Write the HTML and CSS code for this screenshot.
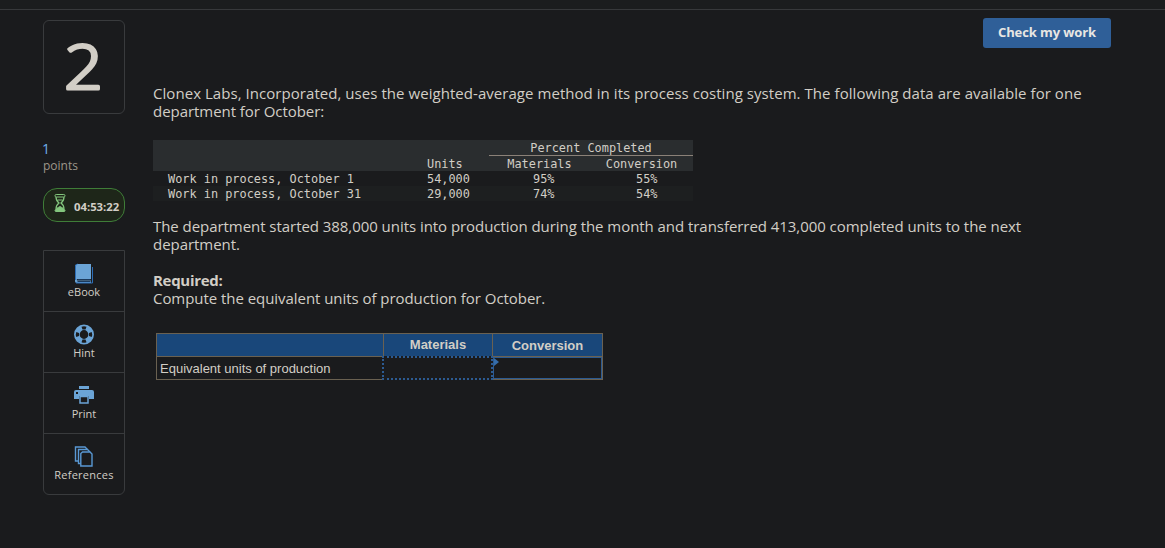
FILE: index.html
```html
<!DOCTYPE html>
<html lang="en">
<head>
    <meta charset="UTF-8">
    <meta name="viewport" content="width=device-width, initial-scale=1.0">
    <title>Question 2</title>
    <link rel="stylesheet" href="styles.css">
</head>
<body>
    <header class="topbar"></header>

    <div class="page">
        <aside class="sidebar">
            <div class="question-number">
                <svg width="80" height="92" viewBox="0 0 80 92">
                    <text x="39.500" y="68" text-anchor="middle" textLength="39" lengthAdjust="spacingAndGlyphs">2</text>
                </svg>
            </div>
            <div class="points">
                <span class="points-value">1</span>
                <span class="points-label">points</span>
            </div>
            <div class="timer">
                <svg width="12" height="20" viewBox="0 0 12 20" fill="none" stroke="#83c67d">
                    <rect x="1" y="1.500" width="10" height="2.500" rx="1.200"/>
                    <path d="M2 4c0 3 1 4.500 3 6c-2 1.500-3 3-3 6M10 4c0 3-1 4.500-3 6c2 1.500 3 3 3 6M3.500 7h5" stroke-width="1.200"/>
                    <path d="M2.500 16c0-1 2-1.500 3.500-2.500c1.500 1 3.500 1.500 3.500 2.500z" fill="#83c67d"/>
                    <rect x="1" y="16.500" width="10" height="2" rx="1" fill="#83c67d"/>
                </svg>
                <span>04:53:22</span>
            </div>

            <nav class="tools">
                <a class="tool">
                    <svg width="20" height="21" viewBox="0 0 20 21">
                        <path d="M3 1h14v15H3.500c-1 0-1 1.500 0 1.500H17V20H3c-1.500 0-2-1-2-2V3c0-1 1-2 2-2z" fill="#6ba4d6"/>
                        <path d="M1.500 17V3q0-1.500 2-2M2 20h16.500V4" fill="none" stroke="#2c6db5"/>
                        <path d="M3.500 16.500h13M3.500 18.500h13" fill="none" stroke="#1c3a5c"/>
                    </svg>
                    <span>eBook</span>
                </a>
                <a class="tool">
                    <svg width="20" height="21" viewBox="0 0 20 21">
                        <circle cx="10" cy="10.500" r="7.200" fill="none" stroke="#6ba4d6" stroke-width="5.600"/>
                        <path d="M7.500 2.800q2.500-1 5 0l-1 2.700h-3zM7.500 18.200q2.500 1 5 0l-1-2.700h-3zM2.300 8q-1 2.500 0 5l2.700-1V9zM17.700 8q1 2.500 0 5l-2.700-1V9z" fill="#1a1b1d"/>
                    </svg>
                    <span>Hint</span>
                </a>
                <a class="tool">
                    <svg width="20" height="21" viewBox="0 0 20 21">
                        <path d="M5 1h10v3H5z" fill="#6ba4d6"/>
                        <path d="M2 5h16q2 0 2 2v7h-5v-3H5v3H0V7q0-2 2-2z" fill="#6ba4d6"/>
                        <path d="M6 11.500h8v6.500H6z" fill="#1a1b1d" stroke="#6ba4d6" stroke-width="1.500"/>
                        <path d="M2 7h2v2H2z" fill="#1a1b1d"/>
                    </svg>
                    <span>Print</span>
                </a>
                <a class="tool">
                    <svg width="20" height="21" viewBox="0 0 20 21" fill="#1a1b1d" stroke="#5998d3" stroke-width="1.400">
                        <path d="M2.500 1h8.500l2 2v12H1.500V1z"/>
                        <path d="M4.500 3.500h9l2 2v12h-11z"/>
                        <path d="M8.500 6h7.500l2 2v12H6.800V7.500z"/>
                    </svg>
                    <span class="wide">References</span>
                </a>
            </nav>
        </aside>

        <main class="content">
            <div class="actions">
                <button class="check-btn">Check my work</button>
            </div>

            <p class="text intro"><span class="loose">Clonex Labs, Incorporated, uses the weighted-average method in its process costing system. The following data are available for one</span><br>department for October:</p>

            <table class="data-table">
                <colgroup>
                    <col class="c-name"><col class="c-units"><col class="c-gap"><col class="c-mat"><col class="c-conv">
                </colgroup>
                <thead>
                    <tr>
                        <th></th><th></th><th></th>
                        <th colspan="2" class="group">Percent Completed</th>
                    </tr>
                    <tr>
                        <th></th><th class="left">Units</th><th></th><th>Materials</th><th>Conversion</th>
                    </tr>
                </thead>
                <tbody>
                    <tr>
                        <td class="name">Work in process, October 1</td><td>54,000</td><td></td><td class="pct">95%</td><td class="pct last">55%</td>
                    </tr>
                    <tr class="odd">
                        <td class="name">Work in process, October 31</td><td>29,000</td><td></td><td class="pct">74%</td><td class="pct last">54%</td>
                    </tr>
                </tbody>
            </table>

            <p class="text">The department started 388,000 units into production during the month and transferred 413,000 completed units to the next<br>department.</p>

            <p class="text required"><strong>Required:</strong><br>Compute the equivalent units of production for October.</p>

            <div class="answer">
                <div class="head"></div>
                <div class="head">Materials</div>
                <div class="head head-conv">Conversion</div>
                <div class="label">Equivalent units of production</div>
                <div class="cell dotted"></div>
                <div class="cell active"></div>
            </div>
        </main>
    </div>
</body>
</html>
```

FILE: styles.css
```css
* {
    box-sizing: border-box;
}

body {
    margin: 0;
    height: 548px;
    overflow: hidden;
    background-color: #1a1b1d;
    color: #d2cec6;
    font-family: "Open Sans", sans-serif;
}

.topbar {
    height: 10px;
    background-color: #1b1d1e;
    border-bottom: 1px solid #37393b;
}

.page {
    display: flex;
    gap: 28px;
    padding-left: 43px;
}

.sidebar {
    width: 82px;
    padding-top: 10px;
}

.question-number {
    height: 94px;
    border: 1px solid #393b3d;
    border-radius: 6px;
}

.question-number svg {
    display: block;
}

.question-number text {
    font-size: 61px;
    font-weight: 300;
    fill: #d2cec6;
    stroke: #d2cec6;
    stroke-width: 3px;
    stroke-linejoin: round;
}

.points {
    display: flex;
    flex-direction: column;
    padding-top: 26px;
    line-height: 17px;
}

.points-value {
    color: #6fb0e8;
    font-size: 14px;
    text-indent: -1px;
}

.points-label {
    color: #9d968a;
    font-size: 12px;
}

.timer {
    display: flex;
    gap: 8px;
    height: 34px;
    margin-top: 14px;
    padding: 4px 0 0 10px;
    border: 1px solid #3f7d38;
    border-radius: 14px;
    background-color: #1e2619;
    font-size: 11.3px;
    font-weight: 700;
    line-height: 28px;
}

.timer svg {
    flex: none;
}

.tools {
    margin-top: 28px;
    border: 1px solid #393b3d;
    border-radius: 0 0 6px 6px;
}

.tool {
    display: flex;
    flex-direction: column;
    align-items: center;
    height: 61px;
    padding-top: 12px;
    font-size: 11px;
    line-height: 17px;
}

.tool svg {
    margin-bottom: -1px;
}

.tool:first-child {
    height: 60px;
}

.tool + .tool {
    border-top: 1px solid #393b3d;
}

.tool .wide {
    letter-spacing: 0.25px;
}

.content {
    width: 958px;
}

.actions {
    display: flex;
    justify-content: flex-end;
    padding-top: 8px;
}

.check-btn {
    width: 128px;
    height: 30px;
    padding: 0 0 2px;
    border: none;
    border-radius: 3px;
    background-color: #2f5f98;
    color: #e8e6e3;
    font-family: "Open Sans", sans-serif;
    font-size: 13px;
    font-weight: 700;
    letter-spacing: -0.1px;
}

.text {
    margin: 0;
    font-size: 15px;
    line-height: 18px;
    letter-spacing: -0.05px;
    white-space: nowrap;
}

.intro {
    margin-top: 36px;
}

.loose {
    letter-spacing: 0.05px;
}

.data-table {
    width: 540px;
    margin: 20px 0 16px;
    border-collapse: collapse;
    table-layout: fixed;
    font-family: "DejaVu Sans Mono", monospace;
    font-size: 11.88px;
    line-height: 13px;
}

.data-table th,
.data-table td {
    height: 15px;
    padding: 2px 0 0;
    font-weight: 400;
    text-align: left;
}

.data-table thead {
    background-color: #2a2d2f;
}

.data-table thead th {
    text-align: center;
}

.data-table thead .left {
    text-align: left;
}

.data-table thead .group {
    border-bottom: 1px solid #8b8178;
}

.data-table .name {
    padding-left: 15px;
}

.data-table .pct {
    padding-left: 44px;
}

.data-table .last {
    padding-left: 46px;
}

.odd {
    background-color: #1d1f20;
}

.c-name { width: 274px; }
.c-units { width: 43px; }
.c-gap { width: 19px; }
.c-mat { width: 101px; }
.c-conv { width: 103px; }

.required {
    margin-top: 18px;
}

.required strong {
    letter-spacing: -0.3px;
}

/* Answer sheet */
.answer {
    display: grid;
    grid-template-columns: 226px 108px 109px;
    grid-template-rows: 22px 22px;
    gap: 1px;
    width: 447px;
    height: 47px;
    margin: 26px 0 0 3px;
    padding: 1px;
    background-color: #6a6151;
    font-family: "Liberation Sans", sans-serif;
    font-size: 13px;
}

.head {
    background-color: #19477a;
    font-weight: 700;
    line-height: 21px;
    text-align: center;
}

.head-conv {
    line-height: 23px;
}

.label {
    padding-left: 3px;
    background-color: #1a1b1d;
    line-height: 23px;
}

.cell {
    background-color: #1a1b1d;
}

.dotted {
    margin: -1px -1px -1px -2px;
    border: 2px dotted #2c5b92;
}

.active {
    border: 1px solid #2c5b92;
}

.active::before {
    content: "";
    display: block;
    width: 0;
    border-left: 5px solid #356dab;
    border-top: 4px solid transparent;
    border-bottom: 4px solid transparent;
}
```
